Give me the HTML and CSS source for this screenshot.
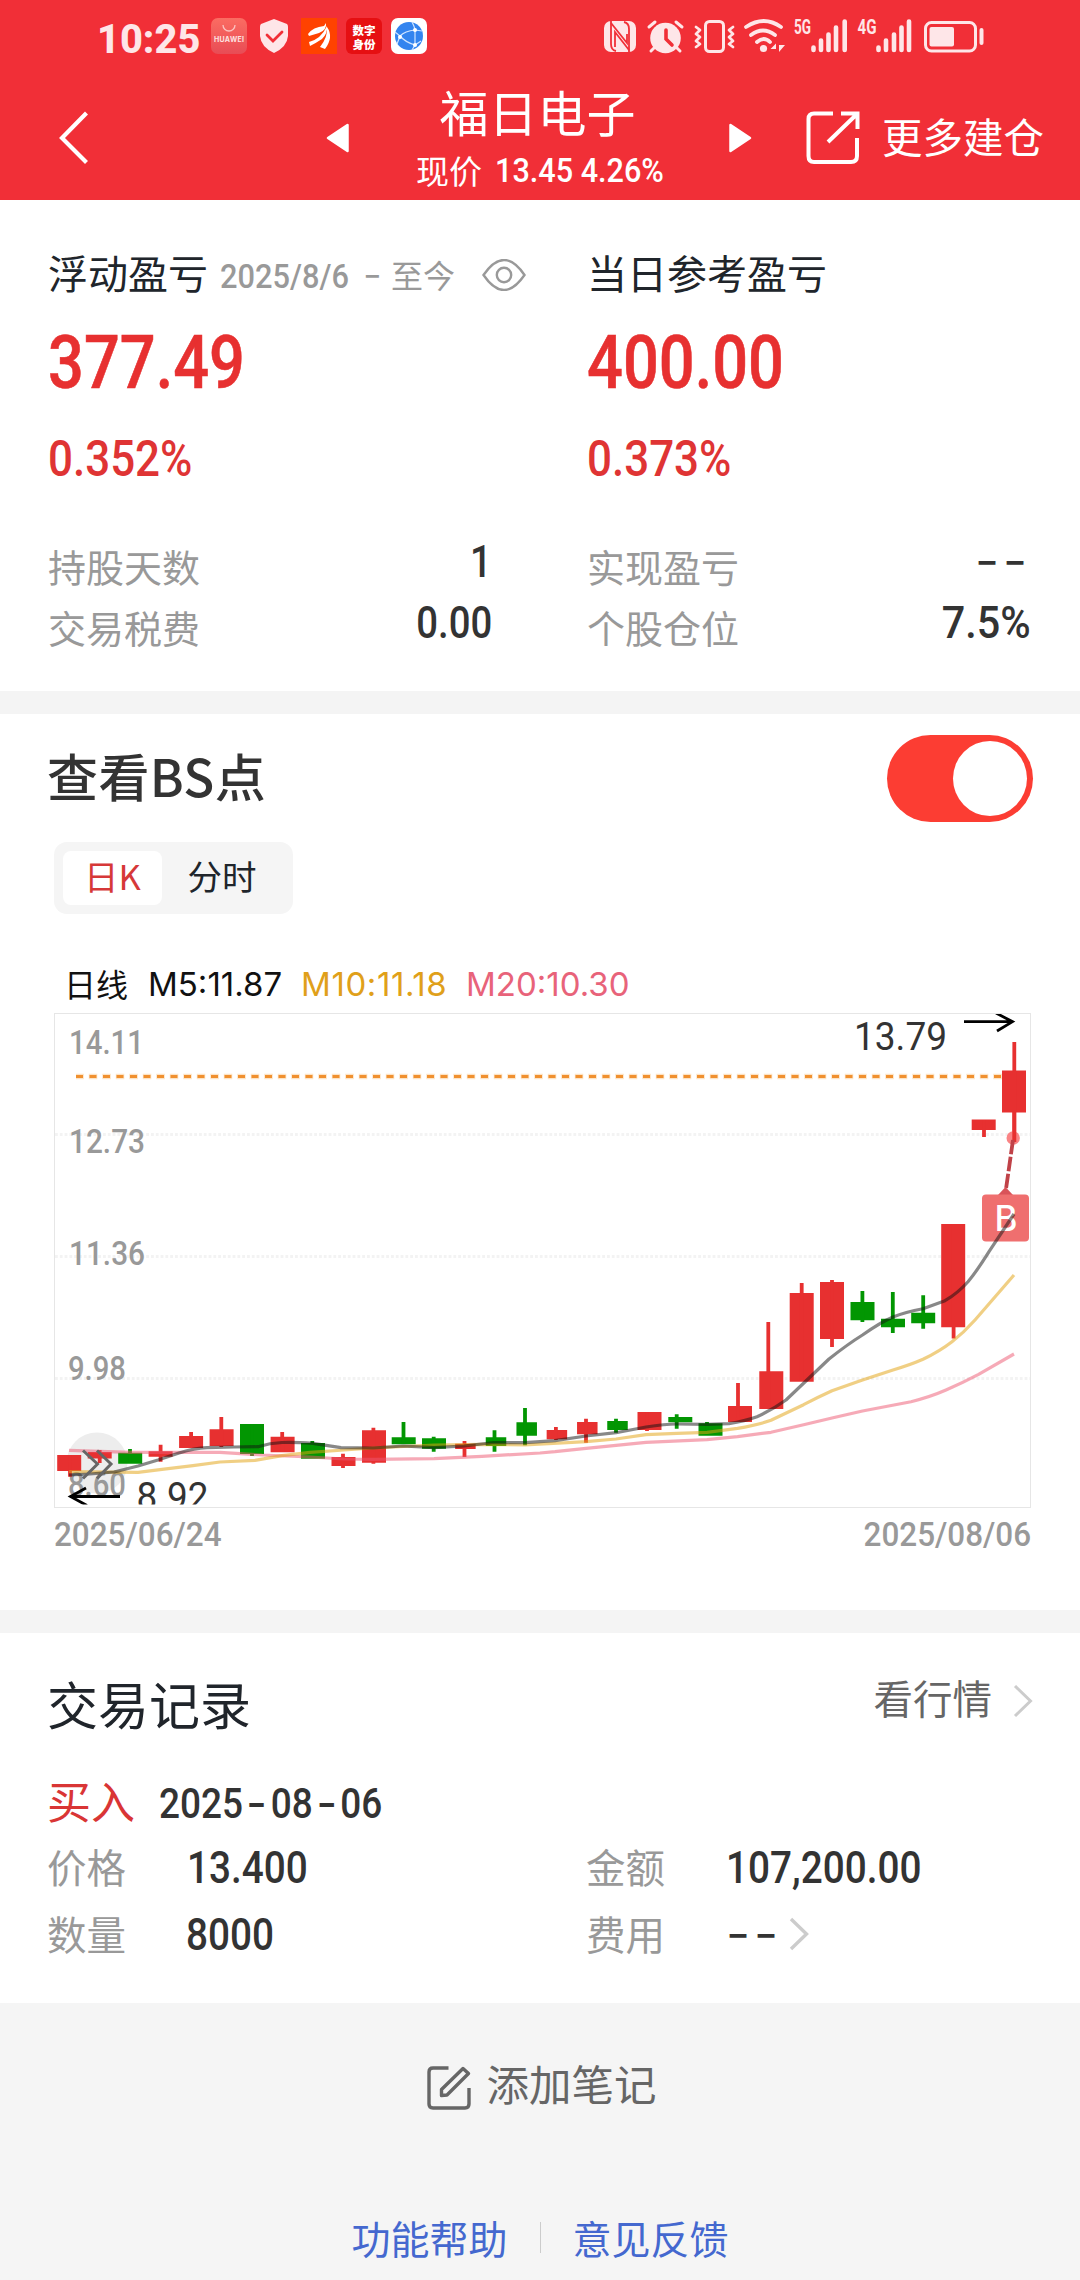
FILE: index.html
```html
<!DOCTYPE html>
<html lang="zh-CN">
<head>
<meta charset="utf-8">
<title>福日电子</title>
<link rel="stylesheet" href="styles.css">
</head>
<body>
<div class="page">
  <header class="top">
    <div class="status">
      <div class="clock"><span class="num">10:25</span></div>
      <div class="apps">
        <svg width="36" height="36" viewBox="0 0 36 36"><defs><linearGradient id="hw" x1="0" y1="0" x2="0" y2="1"><stop offset="0" stop-color="#fb6c62"/><stop offset="1" stop-color="#e84c55"/></linearGradient></defs><rect width="36" height="36" rx="7" fill="url(#hw)"/><path d="M12 7a6 6 0 0 0 12 0" fill="none" stroke="#fbc3bf" stroke-width="1.3"/><text x="3" y="24" class="hw" textLength="30">HUAWEI</text></svg>
        <svg width="30" height="34" viewBox="0 0 30 34"><path d="M15 0 28 5Q29 6 29 8V17Q28 28 15 34 2 28 1 17V8Q1 6 2 5Z" fill="#fee6e8"/><path d="m8 16 6 6 9-9" fill="none" stroke="#f12f37" stroke-width="2.8" stroke-linecap="round"/></svg>
        <svg width="36" height="36" viewBox="0 0 36 36"><rect width="36" height="36" fill="#ff4200"/><path d="M7 16Q12 9 23 8L25 5Q26 12 18 15L8 18ZM8 24Q20 21 26 8 27 15 21 21 15 25 9 28ZM19 29Q27 19 26 9 33 19 24 31Z" fill="#fff"/></svg>
        <svg width="36" height="36" viewBox="0 0 36 36"><rect width="36" height="36" rx="6" fill="#e60f12"/><text x="6.500" y="16.500" class="sf">数字</text><text x="6.500" y="30.500" class="sf">身份</text></svg>
        <svg width="36" height="36" viewBox="0 0 36 36"><rect width="36" height="36" rx="7" fill="#fff"/><circle cx="18" cy="18" r="14" fill="#3384ef"/><path d="M21 4Q24 10 24 12T24 27L21 32M24 12Q14 13 9 18L4 14M9 18Q14 24 24 27L30 23M24 12L31 13M9 18 6 26" fill="none" stroke="#cfe4ff" stroke-width="1.2"/><circle cx="24" cy="12" r="2" fill="#fff"/><circle cx="9" cy="19" r="2" fill="#fff"/><circle cx="24" cy="27" r="2" fill="#fff"/></svg>
      </div>
      <svg class="signals" width="382" height="52" viewBox="603 10 382 52">
        <g fill="#fee6e8">
          <rect x="604" y="21" width="32" height="31" rx="7"/>
          <path d="M611 21V44Q611 50 616 51M629 52V29Q629 23 624 22" fill="none" stroke="#f12f37" stroke-width="1.8"/>
          <path d="M611 23 627 43V34M629 50 615 32V47" fill="none" stroke="#f12f37" stroke-width="1.8"/>
          <circle cx="665.500" cy="38" r="15.300"/>
          <path d="m649 27 6-5M682 27l-6-5M651 51l4-4M680 51l-4-4" stroke="#fee6e8" stroke-width="3" stroke-linecap="round"/>
          <path d="M666 30v9l6 6" fill="none" stroke="#f12f37" stroke-width="3.600" stroke-linecap="round"/>
          <rect x="705.500" y="21.500" width="18" height="30" rx="4" fill="none" stroke="#fee6e8" stroke-width="3"/>
          <path d="m696 27 4 3-4 4 4 3-4 4 4 3-4 3M733 27l-4 3 4 4-4 3 4 4-4 3 4 3" fill="none" stroke="#fee6e8" stroke-width="2.800" stroke-linecap="round" stroke-linejoin="round"/>
          <path d="M746 27q18-12 35 0M751 35q12-9 24 0M757 42q7-6 13 0" fill="none" stroke="#fee6e8" stroke-width="3.800" stroke-linecap="round"/>
          <circle cx="763.500" cy="48.500" r="3.600"/>
          <path d="M776 44v7M770.500 49l5.500-5.500V49ZM779 45h6l-6 7Z"/>
          <path d="M813.500 47.500V50M821 40.500V50M828.500 34.500V50M836 27.500V50M844.700 21.500V50M878.500 47.500V50M886 40.500V50M894 34.500V50M901.500 27.500V50M909 21.500V50" stroke="#fee6e8" stroke-width="4.600" stroke-linecap="round"/>
          <rect x="925.500" y="22.500" width="50" height="28.500" rx="6" fill="none" stroke="#fee6e8" stroke-width="3"/>
          <rect x="929.500" y="27" width="24.500" height="19.500" rx="2"/>
          <rect x="979.500" y="28" width="4" height="17" rx="2"/>
        </g>
        <text x="794" y="34" class="gen" textLength="17" lengthAdjust="spacingAndGlyphs">5G</text>
        <text x="857.500" y="34" class="gen" textLength="19" lengthAdjust="spacingAndGlyphs">4G</text>
      </svg>
    </div>
    <nav class="nav">
      <svg class="back" width="32" height="56" viewBox="0 0 32 56"><path d="M29.500 3 5 28 29.500 52.500" fill="none" stroke="#fff" stroke-width="4.200"/></svg>
      <svg class="prev" width="23" height="30" viewBox="0 0 23 30"><path d="m21.500 2v26L2 15Z" fill="#fff" stroke="#fff" stroke-width="2.500" stroke-linejoin="round"/></svg>
      <div class="title">
        <h1>福日电子</h1>
        <div class="quote"><span>现价</span><b class="num">13.45 4.26%</b></div>
      </div>
      <svg class="next" width="23" height="30" viewBox="0 0 23 30"><path d="M1.500 2v26L21 15Z" fill="#fff" stroke="#fff" stroke-width="2.500" stroke-linejoin="round"/></svg>
      <svg class="share" width="54" height="54" viewBox="0 0 54 54"><path d="M27 2.500H8Q2.500 2.500 2.500 8V45Q2.500 51 8 51H45Q51 51 51 45V27M22 31 50 4M35 2.500H51.500V18" fill="none" stroke="#fff" stroke-width="4"/></svg>
      <span class="more">更多建仓</span>
    </nav>
  </header>

  <section class="profit">
    <div class="col">
      <div class="head"><h2>浮动盈亏</h2><span class="num range">2025/8/6</span><span class="to">-</span><span class="now">至今</span>
        <svg width="44" height="32" viewBox="0 0 44 32"><path d="M1.500 16Q22-14 42.500 16 22 46 1.500 16Z" fill="none" stroke="#999" stroke-width="2.400"/><circle cx="22" cy="16" r="7.200" fill="none" stroke="#999" stroke-width="2.400"/></svg></div>
      <div class="amount"><span class="num">377.49</span></div>
      <div class="rate"><span class="num">0.352%</span></div>
      <div class="row"><span>持股天数</span><b class="num">1</b></div>
      <div class="row"><span>交易税费</span><b class="num">0.00</b></div>
    </div>
    <div class="col">
      <div class="head"><h2>当日参考盈亏</h2></div>
      <div class="amount"><span class="num">400.00</span></div>
      <div class="rate"><span class="num">0.373%</span></div>
      <div class="row"><span>实现盈亏</span><b class="dash">--</b></div>
      <div class="row"><span>个股仓位</span><b class="num pct">7.5%</b></div>
    </div>
  </section>

  <section class="market">
    <div class="market-head"><h2>查看BS点</h2><div class="toggle"><i></i></div></div>
    <div class="tabs"><span class="on">日K</span><span>分时</span></div>
    <div class="legend"><span class="kind">日线</span><span class="m5">M5:11.87</span><span class="m10">M10:11.18</span><span class="m20">M20:10.30</span></div>
    <svg class="chart" width="978" height="495" viewBox="54 1013 978 495">
      <rect x="54.500" y="1013.500" width="976" height="494" fill="#fff" stroke="#e6e6e6"/>
      <path d="M55 1134.500H1030M55 1256.500H1030M55 1378.500H1030" stroke="#f3f3f3" stroke-width="3" stroke-dasharray="2.800 2"/>
      <circle cx="97" cy="1463" r="30.500" fill="#ededed"/>
      <g class="axis">
        <text x="69" y="1054" textLength="75" lengthAdjust="spacingAndGlyphs">14.11</text>
        <text x="69" y="1153" textLength="76" lengthAdjust="spacingAndGlyphs">12.73</text>
        <text x="69" y="1264.500" textLength="76" lengthAdjust="spacingAndGlyphs">11.36</text>
        <text x="68" y="1380" textLength="58" lengthAdjust="spacingAndGlyphs">9.98</text>
        <text x="68" y="1495.500" textLength="58" lengthAdjust="spacingAndGlyphs">8.60</text>
      </g>
      <path d="M76 1076.500H1008" stroke="#fde3c4" stroke-width="5.500"  stroke-dasharray="8.500 5" stroke-dashoffset=".7"/>
      <path d="M76 1076.500H1008" stroke="#f0902f" stroke-width="3.200" stroke-dasharray="7 6.500"/>
      <g fill="none" stroke="#e73030">
        <path stroke-width="24" d="M69.200 1455V1471M99.700 1452V1458.500M160.600 1451.300V1456.700M191.100 1436V1448M221.600 1429.300V1446M282.600 1436.700V1452.300M343.500 1457V1466M374 1430.300V1462.700M649.500 1412V1430M740 1406V1422M771.300 1371.300V1409M801.700 1293V1381.700M832 1282V1339M953.200 1224V1327.300M983.700 1119.500V1130M1014 1070.500V1112.500"/>
        <path stroke-width="20.500" d="M465.400 1443.700V1449M556.900 1430V1439.300M587.300 1422V1434.300"/>
        <path stroke-width="3.800" d="M70 1455V1476.700M99.700 1450V1463M160.600 1444.700V1461.700M191.100 1432V1440M221.300 1417V1447M282.200 1432V1452M343 1453.700V1468M373.400 1427.700V1463.700M464.500 1441V1457M555.900 1427V1440M586 1418.700V1442.700M647 1412V1431M738 1383V1422M768.300 1322V1409M801.700 1283V1380M832 1280V1347M953.600 1224V1338.500M984 1120V1137M1014.300 1042V1142"/>
      </g>
      <g fill="none" stroke="#029602">
        <path stroke-width="24" d="M130.200 1452.700V1463.700M252 1424V1454M313 1443V1458.700M403.700 1437.300V1444.300M434 1438.300V1448.700M680.300 1417V1422.300M710.500 1423.300V1435.700M862.500 1302V1320.300M893 1318.700V1327.300M923.200 1312.700V1323.300"/>
        <path stroke-width="20.500" d="M496 1437.300V1446M526.700 1422.300V1435.700M617.500 1421V1430"/>
        <path stroke-width="3.800" d="M130 1449V1463M252 1424V1456M312.300 1441V1450M403.500 1422V1444M433.700 1436.700V1451.700M494.500 1430.300V1451.700M525 1408V1445.300M616 1418.700V1432.700M676.700 1414.300V1428.700M707 1422V1430M862.400 1291V1322M892.800 1292V1333M923.200 1295.300V1328.700"/>
      </g>
      <circle cx="1013.200" cy="1138" r="6.700" fill="#f96e70" fill-opacity=".85"/>
      <path d="M1014.300 1112V1142" stroke="#e73030" stroke-width="3.800"/>
      <path d="M1013 1140 1006 1189" stroke="#c04248" stroke-width="3.800" stroke-dasharray="14.500 2.500"/>
      <path d="M1005.500 1187 1013 1195H998Z" fill="#d95359"/>
      <rect x="982" y="1194.500" width="47" height="47" rx="4" fill="#ef6f6f"/>
      <text x="994.500" y="1231" class="buy">B</text>
      <g fill="none" stroke-width="3.200" stroke-linejoin="round">
        <path stroke="#ed556f" stroke-opacity=".5" d="M69 1450.300 131 1452.300 220 1452.300 262 1455 310 1457 344 1459 373 1459.300 434 1458.700 482 1456.300 540 1453 555 1451.700 586 1448.300 646 1442.300 707 1439.700 737.500 1436.700 771 1432.300 803.600 1424.700 832 1418 862.500 1411 911 1401.700Q930 1397 946 1390T978.600 1374.300L1014 1354"/>
        <path stroke="#e3a314" stroke-opacity=".52" d="M69 1471.700 138 1472.300 162 1469.300 193 1465.700 220 1462 255 1460.300 282 1455.700 310 1452.300 344 1450 373 1448 434 1445 482 1444.300 525 1445 586 1441.700 616 1439 646 1434.700 677 1433.300 707 1432.300 737.500 1428.300Q758 1425 771 1420.300L803.600 1404.700Q818 1397 832 1390.700L862.500 1380 893 1370Q910 1365 923 1359.300 940 1351 952 1341.700T975 1320L1014 1275"/>
        <path stroke="#111" stroke-opacity=".5" d="M69 1475 90 1474 114 1472 138 1466 158 1460 179 1453Q195 1448 207 1447.700L234 1447 258 1446.700Q270 1443 282 1442.500T313 1443.300L341 1447.700 373 1448 403 1446 434 1447.700 464 1446 494 1442.500 525 1442.700 555 1440.700 586 1436 616 1432.700 646 1427Q665 1424 677 1424L707 1424.300 729 1423.700Q745 1421 757 1416.700 772 1410 786 1400L829 1359Q848 1344 862.500 1335 881 1322 893 1317T923 1308.700L945 1300.700Q958 1293 968 1281.700 977 1271 989 1251.700L1014 1214"/>
      </g>
      <path d="M83 1450.500 97.500 1464 83 1478.500M97 1450.500 111 1464 97 1478.500" fill="none" stroke="#666" stroke-width="3"/>
      <clipPath id="plot"><rect x="55" y="1014" width="976" height="490.500"/></clipPath>
      <g clip-path="url(#plot)">
        <text x="136.500" y="1509.500" class="mark" textLength="72" lengthAdjust="spacingAndGlyphs">8.92</text>
        <text x="854" y="1050" class="mark" textLength="93" lengthAdjust="spacingAndGlyphs">13.79</text>
        <path d="M120 1496.500H71M86 1488 70.500 1496.500 87 1505.500M964 1021.700H1012M996 1013 1012.500 1021.700 997 1031" fill="none" stroke="#000" stroke-width="2.800"/>
      </g>
    </svg>
    <div class="dates"><span class="num">2025/06/24</span><span class="num end">2025/08/06</span></div>
  </section>

  <section class="trades">
    <div class="trades-head"><h2>交易记录</h2><a>看行情<svg width="20" height="34" viewBox="0 0 20 34"><path d="M2 2 17.500 17 2 32" fill="none" stroke="#ccc" stroke-width="3"/></svg></a></div>
    <div class="deal"><span class="side">买入</span><b class="num">2025<i>-</i>08<i>-</i>06</b></div>
    <div class="fields">
      <span>价格</span><b class="num">13.400</b><span>金额</span><b class="num">107,200.00</b>
      <span>数量</span><b class="num qty">8000</b><span>费用</span><div class="fee"><b class="dash">--</b><svg width="20" height="34" viewBox="0 0 20 34"><path d="M2 2 17.500 17 2 32" fill="none" stroke="#ccc" stroke-width="3.400"/></svg></div>
    </div>
  </section>

  <footer class="foot">
    <div class="note"><svg width="46" height="46" viewBox="0 0 46 46"><path d="M22.500 3H7Q3 3 3 7V39Q3 43 7 43H39Q43 43 43 39V23M15.500 30.500V24.500L37 3.500 42.500 8.500 21 30Z" fill="none" stroke="#666" stroke-width="3.400" stroke-linejoin="round"/></svg><span>添加笔记</span></div>
    <div class="links"><a>功能帮助</a><i></i><a>意见反馈</a></div>
  </footer>
</div>
</body>
</html>
```
FILE: styles.css
```css
* { box-sizing: border-box; }
body { margin: 0; background: #f5f5f5; font-family: "Noto Sans CJK SC", sans-serif; color: #333; }
h1, h2 { margin: 0; font-weight: 400; }
i { font-style: normal; }
svg { display: block; flex: none; }
.page { width: 1080px; height: 2280px; overflow: hidden; white-space: nowrap; }

.num { display: inline-block; font-family: Roboto, sans-serif; font-weight: 500; transform: scaleX(.88); transform-origin: 0 50%; }
.dash { display: inline-block; font-family: Inter, sans-serif; font-weight: 500; letter-spacing: 3px; transform: scaleX(1.3); }

.top { height: 200px; background: #f12f37; color: #fff; }
.status { height: 72px; display: flex; align-items: center; padding-left: 97px; }
.clock { width: 114px; line-height: 40px; padding-top: 2px; font-size: 41px; color: #fee6e8; }
.clock .num { font-weight: 800; transform: scaleX(.97); }
.apps { display: flex; align-items: center; gap: 9px; width: 392px; }
.apps svg:nth-child(2) { margin: 0 3px; }
.hw { font: 700 7px Inter, sans-serif; fill: #fde3e1; }
.sf { font: 900 11.500px/1 "Noto Sans CJK SC", sans-serif; fill: #fff; }
.gen { font: 700 20px Roboto, sans-serif; fill: #fee6e8; }

.nav { height: 128px; display: flex; align-items: flex-start; padding-left: 57px; }
.back { margin-top: 38px; }
.prev { margin: 51px 0 0 237px; }
.title { width: 380px; text-align: center; }
.title h1 { font-size: 49px; line-height: 60px; padding-top: 9px; padding-right: 3px; }
.quote { display: flex; height: 40px; line-height: 40px; margin-top: 9px; padding-left: 67px; align-items: center; font-size: 33px; }
.quote .num { font-size: 34px; margin-left: 13px; transform: scaleX(.9); line-height: 40px; }
.next { margin-top: 51px; }
.share { margin: 39px 0 0 54px; }
.more { margin: 34px 0 0 22px; font-size: 40.500px; line-height: 60px; }

.profit { height: 491px; padding: 42px 48px 0; background: #fff; display: grid; grid-template-columns: 444px 444px; gap: 95px; }
.head { height: 60px; display: flex; align-items: center; color: #999; }
.head > * { flex: none; }
.head h2 { font-size: 40px; line-height: 60px; color: #20252b; width: 172px; }
.profit .col:nth-child(2) h2 { width: auto; }
.range { font-size: 34px; width: 137px; margin-top: 8px; transform: scaleX(.905); }
.to { font: 34px Inter, sans-serif; width: 34px; padding: 5px 0 0 6px; transform: scaleX(1.2); transform-origin: 6px 50%; }
.now { font-size: 32px; line-height: 60px; width: 91px; padding-top: 3px; }
.head svg { margin-top: 5px; }
.amount { height: 70px; line-height: 70px; font-size: 75px; color: #e73030; margin-top: 19px; }
.amount .num { transform: scaleX(.842); -webkit-text-stroke: .6px #e73030; }
.rate { height: 50px; line-height: 50px; font-size: 50.500px; color: #df3434; margin: 38px 0 56px; }
.rate .num { transform: scaleX(.87); }
.row { height: 61px; line-height: 61px; display: flex; justify-content: space-between; font-size: 38px; color: #999; }
.row .num { font-size: 43.500px; line-height: 56px; color: #333; transform-origin: 100% 50%; }
.row .pct { transform: scaleX(.95); }
.row .dash { color: #333; line-height: 51px; font-size: 40px; transform-origin: 100% 50%; }

.market { height: 942px; border: solid #f4f4f4; border-width: 23px 0; background: #fff; padding: 21px 47px 0 54px; }
.market-head { display: flex; justify-content: space-between; height: 87px; }
.market-head h2 { font-size: 51px; font-weight: 500; line-height: 80px; margin-left: -7px; color: #333; letter-spacing: .4px; }
.toggle { width: 146px; height: 87px; border-radius: 44px; background: #fc3d33; padding: 6px; display: flex; justify-content: flex-end; }
.toggle i { width: 74px; height: 75px; border-radius: 50%; background: #fff; }
.tabs { margin-top: 20px; width: 239px; height: 72px; border-radius: 13px; background: #f5f5f5; padding: 9px; display: flex; color: #20252b; font-size: 34.500px; line-height: 49px; }
.tabs span { width: 120px; text-align: center; height: 54px; }
.tabs .on { width: 99px; background: #fff; color: #d63838; border-radius: 8px; }
.legend { margin-top: 46px; height: 48px; display: flex; align-items: center; font: 33px Inter, sans-serif; margin-bottom: 5px; }
.legend .kind { font: 32px "Noto Sans CJK SC", sans-serif; color: #111; width: 94px; padding: 0 0 3px 10px; }
.m5 { color: #111; width: 153px; }
.m10 { color: #e0a01a; width: 165px; letter-spacing: .6px; }
.m20 { color: #e8637a; }
.axis { font: 500 34px Roboto, sans-serif; fill: #999; }
.mark { font: 400 39.500px Roboto, sans-serif; fill: #333; }
.buy { font: 500 35px Inter, sans-serif; fill: #fff; }
.dates { display: flex; justify-content: space-between; height: 40px; line-height: 40px; margin-top: 6px; font-size: 34px; color: #999; padding-right: 2px; }
.dates .num { transform: scaleX(.925); }
.dates .end { transform-origin: 100% 50%; }

.trades { height: 370px; background: #fff; padding: 34px 47px 0; }
.trades-head { height: 72px; display: flex; justify-content: space-between; }
.trades-head h2 { font-size: 51px; line-height: 72px; color: #20252b; }
.trades-head a { display: flex; align-items: center; gap: 21px; font-size: 39.500px; line-height: 60px; height: 60px; color: #666; }
.trades-head svg { margin-top: 8px; }
.deal { display: flex; align-items: center; height: 64px; margin-top: 29px; }
.side { font-size: 44px; line-height: 60px; width: 112px; color: #d93535; }
.deal .num { font-size: 42px; padding-top: 5px; }
.deal i { display: inline-block; font-family: Inter, sans-serif; margin: 0 6px; transform: scaleX(1.2); }
.fields { display: grid; grid-template-columns: 140px 399px 140px 1fr; grid-template-rows: 67px 67px; align-items: center; color: #999; font-size: 39.500px; line-height: 60px; }
.fields b { color: #333; }
.fields .num { font-size: 43.500px; padding-top: 6px; transform: scaleX(.89); }
.fields .qty { margin-left: -1px; }
.fee { display: flex; align-items: center; gap: 20px; padding-top: 2px; }
.fee .dash { font-size: 40px; transform-origin: 0 50%; }

.foot { background: #f5f5f5; height: 277px; padding-top: 50px; }
.note { display: flex; justify-content: center; gap: 14px; height: 60px; font-size: 42.500px; line-height: 60px; color: #666; padding-left: 3px; }
.note svg { margin-top: 12px; }
.links { display: flex; align-items: center; justify-content: center; gap: 32px; height: 60px; margin-top: 94px; font-size: 39px; line-height: 60px; color: #4468cf; }
.links i { width: 1px; height: 31px; background: #ccc; }
```
